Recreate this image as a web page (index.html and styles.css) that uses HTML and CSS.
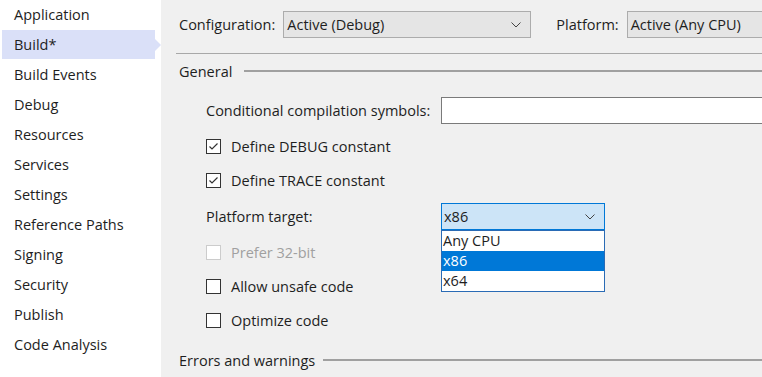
FILE: index.html
```html
<!DOCTYPE html>
<html lang="en">
<head>
  <meta charset="UTF-8">
  <title>Build Properties</title>
  <link rel="stylesheet" href="styles.css">
</head>
<body>
  <div class="sidebar">
    <div class="nav-item">Application</div>
    <div class="nav-item selected">Build*</div>
    <div class="nav-item">Build Events</div>
    <div class="nav-item">Debug</div>
    <div class="nav-item">Resources</div>
    <div class="nav-item">Services</div>
    <div class="nav-item">Settings</div>
    <div class="nav-item">Reference Paths</div>
    <div class="nav-item">Signing</div>
    <div class="nav-item">Security</div>
    <div class="nav-item">Publish</div>
    <div class="nav-item">Code Analysis</div>
  </div>

  <div class="main">
    <div class="toolbar">
      <span class="toolbar-label">Configuration:</span>
      <div class="combo config-combo">
        <span>Active (Debug)</span>
        <svg class="chevron" width="10" height="6" viewBox="0 0 10 6"><polyline points="0.5,0.5 5,5 9.5,0.5" fill="none" stroke="#444" stroke-width="1"/></svg>
      </div>
      <span class="toolbar-label platform-label">Platform:</span>
      <div class="combo platform-combo">
        <span>Active (Any CPU)</span>
      </div>
    </div>

    <div class="separator"></div>

    <div class="section-head general-head">
      <span>General</span>
      <div class="section-line"></div>
    </div>

    <div class="field-row">
      <span class="field-label">Conditional compilation symbols:</span>
      <div class="textbox"></div>
    </div>

    <div class="check-row first">
      <span class="checkbox"><svg width="13" height="13" viewBox="0 0 13 13"><polyline points="2.5,6.5 5,9 10.5,3.5" fill="none" stroke="#333" stroke-width="1.2"/></svg></span>
      <span>Define DEBUG constant</span>
    </div>
    <div class="check-row">
      <span class="checkbox"><svg width="13" height="13" viewBox="0 0 13 13"><polyline points="2.5,6.5 5,9 10.5,3.5" fill="none" stroke="#333" stroke-width="1.2"/></svg></span>
      <span>Define TRACE constant</span>
    </div>

    <div class="field-row target-row">
      <span class="field-label">Platform target:</span>
      <div class="target-wrap">
        <div class="combo target-combo">
          <span>x86</span>
          <svg class="chevron" width="10" height="6" viewBox="0 0 10 6"><polyline points="0.5,0.5 5,5 9.5,0.5" fill="none" stroke="#444" stroke-width="1"/></svg>
        </div>
        <div class="dropdown-list">
          <div class="list-item">Any CPU</div>
          <div class="list-item active">x86</div>
          <div class="list-item">x64</div>
        </div>
      </div>
    </div>

    <div class="check-row first disabled">
      <span class="checkbox"></span>
      <span>Prefer 32-bit</span>
    </div>
    <div class="check-row">
      <span class="checkbox"></span>
      <span>Allow unsafe code</span>
    </div>
    <div class="check-row">
      <span class="checkbox"></span>
      <span>Optimize code</span>
    </div>

    <div class="section-head errors-head">
      <span>Errors and warnings</span>
      <div class="section-line"></div>
    </div>
  </div>
</body>
</html>
```

FILE: styles.css
```css
body {
  margin: 0;
  display: flex;
  height: 377px;
  overflow: hidden;
  font-family: 'Open Sans', sans-serif;
  font-size: 14.5px;
  color: #1e1e1e;
  background-color: #F0F0F0;
}

.sidebar {
  width: 161px;
  flex-shrink: 0;
  background: #FFFFFF;
}

.nav-item {
  height: 30px;
  line-height: 30px;
  padding-left: 14px;
  margin-right: 6px;
  position: relative;
  white-space: nowrap;
}

.nav-item.selected {
  background: #DAE0F8;
  margin-left: 2px;
  padding-left: 12px;
  height: 29px;
  line-height: 29px;
  margin-bottom: 1px;
}

/* little pointer on the selected item */
.nav-item.selected::after {
  content: '';
  position: absolute;
  right: -6px;
  top: 9px;
  border-top: 6px solid transparent;
  border-bottom: 6px solid transparent;
  border-left: 6px solid #DAE0F8;
}

.main {
  flex: 1;
  min-width: 0;
  padding: 11px 0 0 15px;
  overflow: hidden;
}

.toolbar {
  display: flex;
  align-items: center;
  height: 27px;
  padding-left: 3px;
  white-space: nowrap;
}

.toolbar-label {
  margin-right: 8px;
}

.platform-label {
  margin-left: 25px;
}

.combo {
  height: 25px;
  border: 1px solid #ACACAC;
  background: #E5E5E5;
  display: flex;
  align-items: center;
  justify-content: space-between;
  padding: 0 9px 0 3px;
  flex-shrink: 0;
}

.config-combo {
  width: 234px;
}

.platform-combo {
  width: 200px;
}

.chevron {
  display: block;
}

.separator {
  height: 1px;
  background: #A8A8A8;
  margin-top: 15px;
}

.section-head {
  display: flex;
  align-items: center;
  height: 20px;
  padding-left: 3px;
  white-space: nowrap;
}

.general-head {
  margin-top: 7px;
}

.errors-head {
  margin-top: 13px;
}

.section-line {
  flex: 1;
  height: 2px;
  background: #A0A0A0;
  margin-left: 12px;
}

.errors-head .section-line {
  margin-left: 8px;
}

.field-row {
  display: flex;
  align-items: center;
  height: 27px;
  margin-top: 16px;
  padding-left: 30px;
  white-space: nowrap;
}

.field-label {
  width: 235px;
  flex-shrink: 0;
}

.textbox {
  flex: 1;
  height: 25px;
  background: #FFFFFF;
  border: 1px solid #7A7A7A;
  border-right: none;
}

.target-row {
  margin-top: 6px;
}

.target-wrap {
  position: relative;
}

.target-combo {
  width: 151px;
  background: #CCE4F7;
  border-color: #0078D7;
  padding-left: 2px;
}

.dropdown-list {
  position: absolute;
  top: 27px;
  left: 0;
  width: 162px;
  background: #FFFFFF;
  border: 1px solid #2A6BB5;
  z-index: 2;
}

.list-item {
  height: 20px;
  line-height: 20px;
  padding-left: 1px;
}

.list-item.active {
  background: #0078D7;
  color: #FFFFFF;
}

.check-row {
  display: flex;
  align-items: center;
  height: 34px;
  padding-left: 30px;
  white-space: nowrap;
}

.check-row.first {
  margin-top: 5px;
}

.checkbox {
  width: 13px;
  height: 13px;
  border: 1px solid #333333;
  background: #FFFFFF;
  margin-right: 10px;
  display: flex;
}

.check-row.disabled {
  color: #A0A0A0;
}

.check-row.disabled .checkbox {
  border-color: #CCCCCC;
}
```
